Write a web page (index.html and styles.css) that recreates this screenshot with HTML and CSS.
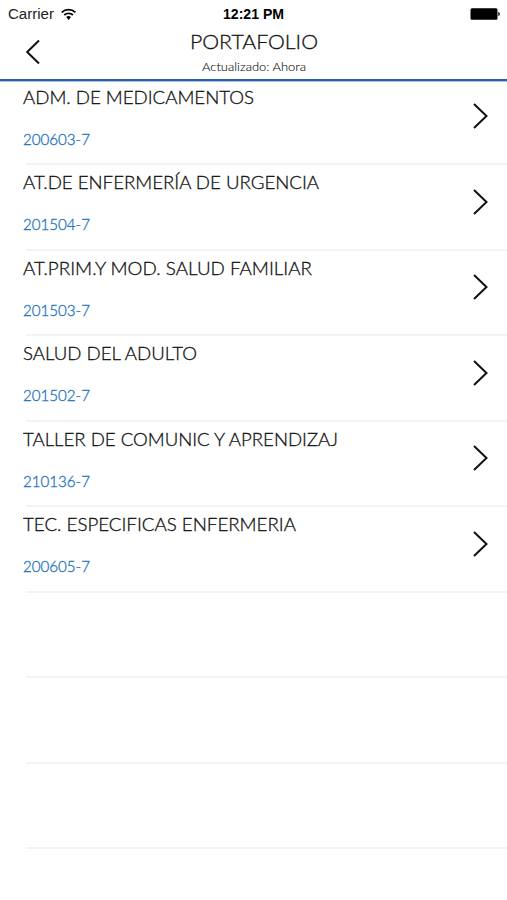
FILE: index.html
```html
<!DOCTYPE html>
<html lang="es">
<head>
    <meta charset="UTF-8">
    <meta name="viewport" content="width=device-width, initial-scale=1.0">
    <title>Portafolio</title>
    <link rel="stylesheet" href="styles.css">
</head>
<body>
    <div class="status-bar">
        <div class="carrier">
            <svg class="carrier-name" width="47" height="16"><text x="0" y="13" textLength="46" lengthAdjust="spacingAndGlyphs">Carrier</text></svg>
            <svg class="wifi" width="16" height="13" viewBox="0 0 16 13">
                <path d="M.8 4.300a9.800 9.800 0 0 1 13.600 0M3.300 7a6.300 6.300 0 0 1 8.600 0" fill="none" stroke="#000" stroke-width="1.8"/>
                <path d="M5.200 9.100a3.600 3.600 0 0 1 4.800 0L7.600 12z"/>
            </svg>
        </div>
        <svg class="clock" width="62" height="16"><text x="0" y="13" textLength="61" lengthAdjust="spacingAndGlyphs">12:21 PM</text></svg>
        <svg class="battery" width="30" height="12" viewBox="0 0 30 12">
            <rect x=".5" y=".3" width="27" height="11.400" rx="1.5"/>
            <path d="M28.300 4c2 .5 2 3.500 0 4z"/>
        </svg>
    </div>
    <header class="nav-bar">
        <svg class="back" width="16" height="26" viewBox="0 0 16 26"><path d="M14 1.500L2.200 13L14 24.500"/></svg>
        <div class="titles">
            <svg class="title" width="130" height="26"><text x="1" y="21" textLength="128" lengthAdjust="spacingAndGlyphs">PORTAFOLIO</text></svg>
            <svg class="subtitle" width="106" height="18"><text x="1" y="13" textLength="104" lengthAdjust="spacingAndGlyphs">Actualizado: Ahora</text></svg>
        </div>
    </header>
    <ul class="list" id="list"></ul>

    <script>
        // name, code, width of the name
        const courses = [
            ['ADM. DE MEDICAMENTOS', '200603-7', 231],
            ['AT.DE ENFERMERÍA DE URGENCIA', '201504-7', 296],
            ['AT.PRIM.Y MOD. SALUD FAMILIAR', '201503-7', 289],
            ['SALUD DEL ADULTO', '201502-7', 174],
            ['TALLER DE COMUNIC Y APRENDIZAJ', '210136-7', 315],
            ['TEC. ESPECIFICAS ENFERMERIA', '200605-7', 273]
        ];
        const list = document.getElementById('list');

        for (let i = 0; i < 9; i++) {
            const row = document.createElement('li');
            row.className = 'row';
            if (courses[i]) {
                const [name, code, width] = courses[i];
                row.innerHTML = `
                    <div class="course">
                        <svg class="name" width="330" height="28"><text x="0" y="20" textLength="${width}" lengthAdjust="spacingAndGlyphs">${name}</text></svg>
                        <svg class="code" width="80" height="24"><text x="0" y="16" textLength="67" lengthAdjust="spacingAndGlyphs">${code}</text></svg>
                    </div>
                    <svg class="arrow" width="18" height="28" viewBox="0 0 18 28"><path d="M2 2L14.500 14L2 26"/></svg>`;
            }
            list.appendChild(row);
        }
    </script>
</body>
</html>
```

FILE: styles.css
```css
body {
    margin: 0;
    height: 900px;
    overflow: hidden;
    background-color: #fff;
    font-family: Lato, sans-serif;
    color: #222;
}
svg {
    display: block;
    flex-shrink: 0;
}
.status-bar {
    display: grid;
    grid-template-columns: 1fr auto 1fr;
    align-items: center;
    height: 28px;
    padding: 0 7px 0 8px;
    box-sizing: border-box;
    font-family: "Liberation Sans", Arial, sans-serif;
    font-size: 14px;
}
.carrier {
    display: flex;
    align-items: center;
    gap: 6px;
}
.carrier-name {
    fill: #222;
}
.clock {
    font-weight: bold;
}
.battery {
    justify-self: end;
}
.nav-bar {
    display: grid;
    grid-template-columns: 1fr auto 1fr;
    height: 51px;
    border-bottom: 2px solid #2b5fa9;
    box-shadow: 0 1px 0 #a4c3e6;
}
.back {
    margin: 11px 0 0 25px;
}
.back path,
.arrow path {
    fill: none;
    stroke: #111;
    stroke-width: 2;
}
.titles {
    display: flex;
    flex-direction: column;
    align-items: center;
}
.title,
.subtitle,
.name {
    font-weight: 300;
    fill: #111;
    stroke: #111;
    stroke-width: .3px;
}
.title {
    font-size: 20.5px;
}
.subtitle {
    margin-top: 4px;
    font-size: 12px;
    stroke-width: .1px;
}
.list {
    margin: -1.5px 0 0;
    padding: 0;
    list-style: none;
}
.row {
    display: flex;
    justify-content: space-between;
    height: 85.5px;
    box-sizing: border-box;
    padding: 4px 17px 0 23px;
    background: linear-gradient(#f3f3f3, #f3f3f3) 26px 100% / 100% 2px no-repeat;
}
.name {
    font-size: 18.5px;
}
.code {
    margin-top: 17px;
    font-size: 16px;
    font-weight: 300;
    fill: #2674bd;
    stroke: #2674bd;
    stroke-width: .35px;
}
.arrow {
    margin-top: 18.5px;
}
```
